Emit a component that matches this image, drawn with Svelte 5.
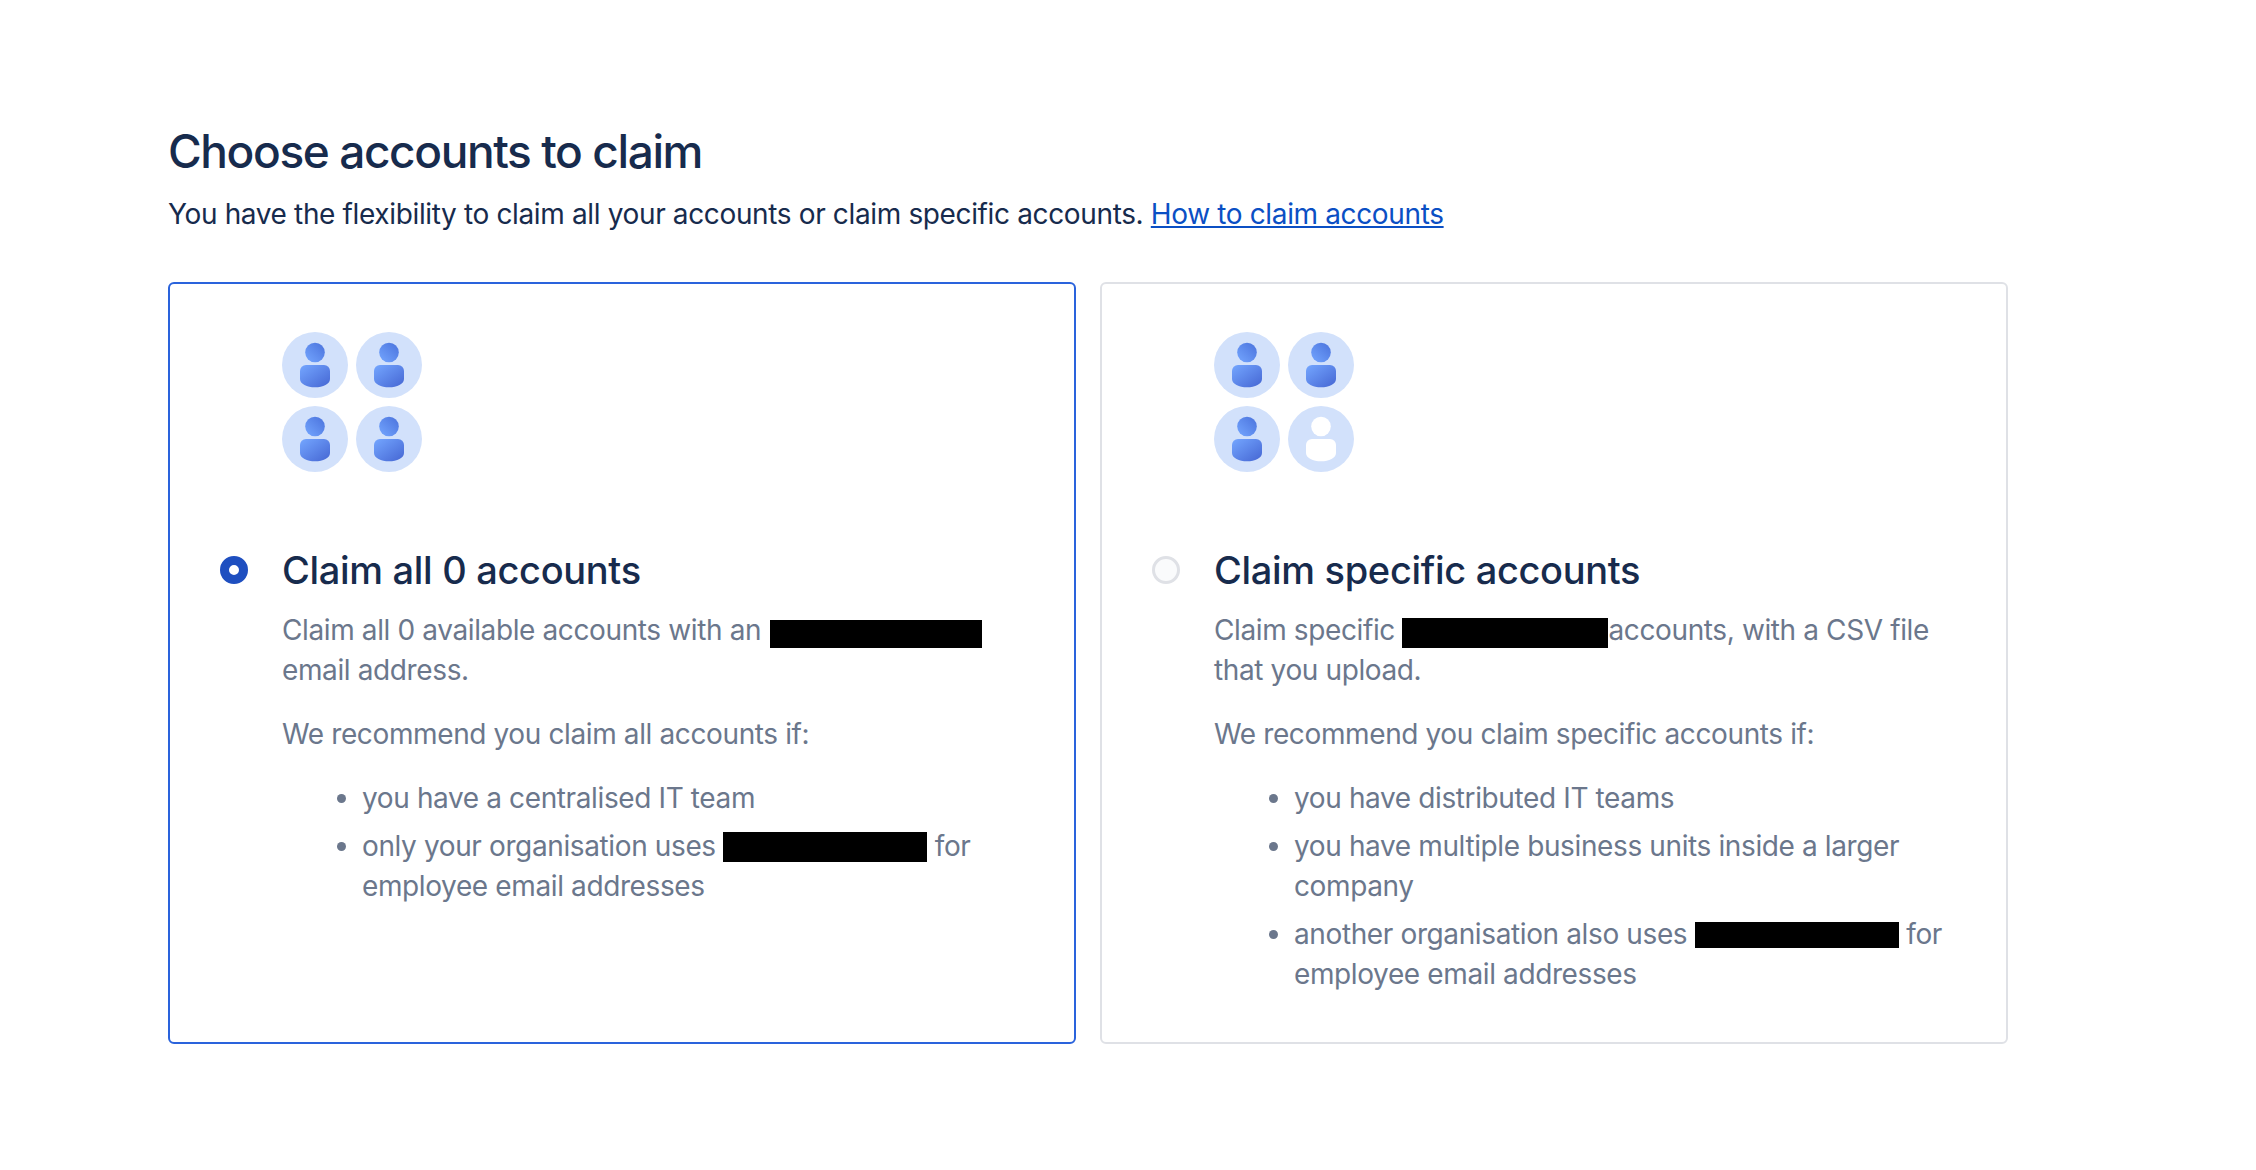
<script>
    // true = filled person, false = white placeholder
    let options = [
        {
            people: [true, true, true, true],
            title: "Claim all 0 accounts",
            selected: true,
            recommend: "We recommend you claim all accounts if:",
        },
        {
            people: [true, true, true, false],
            title: "Claim specific accounts",
            selected: false,
            recommend: "We recommend you claim specific accounts if:",
        },
    ];
</script>

{#snippet avatars(people)}
    <div class="avatars">
        {#each people as filled}
            <svg width="66" height="66" viewBox="0 0 66 66">
                <defs>
                    <linearGradient id="head" x1="0" y1="1" x2="1" y2="0">
                        <stop offset="0" stop-color="#74a6ff" />
                        <stop offset="1" stop-color="#4a72dc" />
                    </linearGradient>
                    <linearGradient id="body" x1="0" y1="0" x2="1" y2="1">
                        <stop offset="0" stop-color="#74a6ff" />
                        <stop offset="1" stop-color="#4566d3" />
                    </linearGradient>
                </defs>
                <circle cx="33" cy="33" r="33" fill="#d2e1fb" />
                <circle cx="33" cy="20.5" r="9.8" fill={filled ? "url(#head)" : "#fff"} />
                <path
                    d="M18 39a6 6 0 0 1 6-6h18a6 6 0 0 1 6 6v8c0 5-7 8.300-15 8.300s-15-3.300-15-8.300z"
                    fill={filled ? "url(#body)" : "#fff"}
                />
            </svg>
        {/each}
    </div>
{/snippet}

<main class="page">
    <h1>Choose accounts to claim</h1>
    <p class="intro">
        You have the flexibility to claim all your accounts or claim specific accounts.
        <a href="#how">How to claim accounts</a>
    </p>

    <div class="cards">
        <section class="card selected">
            {@render avatars(options[0].people)}
            <div class="heading">
                <span class="radio on"></span>
                <h2>{options[0].title}</h2>
            </div>
            <div class="body">
                <p>Claim all 0 available accounts with an <span class="redact first"></span> email address.</p>
                <p>{options[0].recommend}</p>
                <ul>
                    <li>you have a centralised IT team</li>
                    <li>only your organisation uses <span class="redact"></span> for employee email addresses</li>
                </ul>
            </div>
        </section>

        <section class="card">
            {@render avatars(options[1].people)}
            <div class="heading">
                <span class="radio"></span>
                <h2>{options[1].title}</h2>
            </div>
            <div class="body">
                <p>Claim specific <span class="redact second"></span>accounts, with a CSV file that you upload.</p>
                <p>{options[1].recommend}</p>
                <ul>
                    <li>you have distributed IT teams</li>
                    <li>you have multiple business units inside a larger company</li>
                    <li>another organisation also uses <span class="redact third"></span> for employee email addresses</li>
                </ul>
            </div>
        </section>
    </div>
</main>

<style>
    :global(body) {
        background: #fff;
        font-family: Inter, "Liberation Sans", sans-serif;
    }

    .page {
        width: 1840px;
        padding: 123px 0 0 168px;
    }

    h1 {
        margin: 0;
        font-size: 46px;
        line-height: 56px;
        font-weight: 550;
        letter-spacing: -1.4px;
        color: #172b4d;
    }

    .intro {
        margin: 15px 0 0;
        font-size: 28px;
        line-height: 40px;
        letter-spacing: -0.36px;
        color: #172b4d;
    }

    a {
        color: #0b4fc4;
    }

    .cards {
        display: grid;
        grid-template-columns: 908px 908px;
        gap: 24px;
        margin-top: 48px;
    }

    .card {
        box-sizing: border-box;
        height: 762px;
        padding: 48px 50px 0 112px;
        border: 2px solid #dfe1e6;
        border-radius: 6px;
    }

    .card.selected {
        border-color: #2a63dc;
    }

    .avatars {
        display: grid;
        grid-template-columns: 66px 66px;
        gap: 8px;
    }

    .avatars svg {
        display: block;
    }

    .heading {
        position: relative;
        margin-top: 74px;
    }

    h2 {
        margin: 0;
        font-size: 38px;
        line-height: 48px;
        font-weight: 550;
        letter-spacing: -0.32px;
        color: #172b4d;
    }

    .radio {
        position: absolute;
        left: -62px;
        top: 10px;
        box-sizing: border-box;
        width: 28px;
        height: 28px;
        border-radius: 50%;
        border: 3px solid #dfe1e6;
        background: #fafbfc;
    }

    .radio.on {
        border: 9.5px solid #1f4fc0;
        background: #fff;
    }

    .body {
        margin-top: 16px;
        font-size: 28px;
        line-height: 40px;
        letter-spacing: -0.38px;
        color: #6b778c;
    }

    .body p {
        margin: 0 0 24px;
    }

    ul {
        margin: 0;
        padding-left: 80px;
    }

    li {
        margin-bottom: 8px;
    }

    li::marker {
        color: #6b778c;
    }

    .redact {
        display: inline-block;
        width: 204px;
        height: 30px;
        vertical-align: -6px;
        background: #000;
    }

    .redact.first {
        width: 212px;
        height: 28px;
        margin-left: 1px;
        vertical-align: -8px;
    }

    .redact.second {
        width: 206px;
        vertical-align: -8px;
    }

    .redact.third {
        height: 26px;
        vertical-align: -4px;
    }
</style>
